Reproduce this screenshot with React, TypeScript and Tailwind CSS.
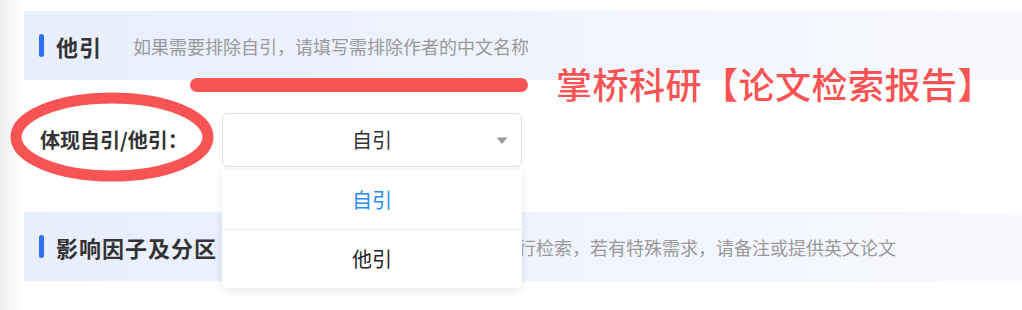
import React from "react";

const font = { fontFamily: '"Noto Sans CJK SC", "Noto Sans", sans-serif' };

function SectionHeader({ title, sub }: { title: string; sub: string }) {
  return (
    <div className="h-[69px] flex items-center pl-[15px] bg-gradient-to-r from-[#e8eefd] to-[#f8f9fe]">
      <div className="w-[5px] h-[23px] rounded-full bg-[#2f6ff5]" />
      <div className="ml-[12px] text-[22px] tracking-[1px] font-bold text-[#333] leading-none whitespace-nowrap">{title}</div>
      <div className="ml-[31px] text-[18px] text-[#999] leading-none whitespace-nowrap">{sub}</div>
    </div>
  );
}

export default function App() {
  return (
    <div className="relative w-[1022px] h-[310px] bg-white overflow-hidden flex" style={font}>
      <div className="w-[22px] h-full bg-gradient-to-r from-[#eeeeee] via-[#f7f7f7] to-white" />
      <div className="flex-1 pt-[11px] pl-[2px]">
        <SectionHeader title="他引" sub="如果需要排除自引，请填写需排除作者的中文名称" />
        <div className="mt-[33px] h-[54px] flex items-center pl-[16px]">
          <div className="w-[182px] text-[20px] font-bold text-[#333] leading-none whitespace-nowrap">体现自引/他引：</div>
          <div className="relative w-[300px] h-[54px] border border-[#dcdfe6] rounded-[5px] flex items-center justify-center bg-white">
            <span className="text-[20px] text-[#333] leading-none">自引</span>
            <svg className="absolute right-[13px] top-[23px]" width="12" height="7" viewBox="0 0 12 7">
              <path d="M0.5 0.5 L11.5 0.5 L6.6 6.3 Q6 7 5.4 6.3 Z" fill="#999" />
            </svg>
            <div className="absolute z-10 left-[-1px] top-[56px] w-[300px] bg-white rounded-[4px] shadow-[0_2px_10px_rgba(0,0,0,0.10)] flex flex-col">
              <div className="h-[59px] flex items-center justify-center text-[20px] text-[#2b8cf3] leading-none">自引</div>
              <div className="h-px bg-[#e8e8e8]" />
              <div className="h-[58px] flex items-center justify-center text-[20px] text-[#222] leading-none">他引</div>
            </div>
          </div>
        </div>
        <div className="mt-[45px]">
          <SectionHeader title="影响因子及分区" sub="默认按照中文论文的题目及作者进行检索，若有特殊需求，请备注或提供英文论文" />
        </div>
      </div>
      <svg className="absolute inset-0 pointer-events-none" width="1022" height="310" viewBox="0 0 1022 310">
        <ellipse cx="112" cy="137" rx="96" ry="39" fill="none" stroke="#f95454" strokeWidth="11" />
        <line x1="197" y1="85" x2="521" y2="85" stroke="#f95454" strokeWidth="14" strokeLinecap="round" />
      </svg>
      <div className="absolute left-[556px] top-[65px] text-[36px] tracking-[0.5px] leading-none font-medium text-[#f95454] whitespace-nowrap">
        掌桥科研【论文检索报告】
      </div>
    </div>
  );
}
